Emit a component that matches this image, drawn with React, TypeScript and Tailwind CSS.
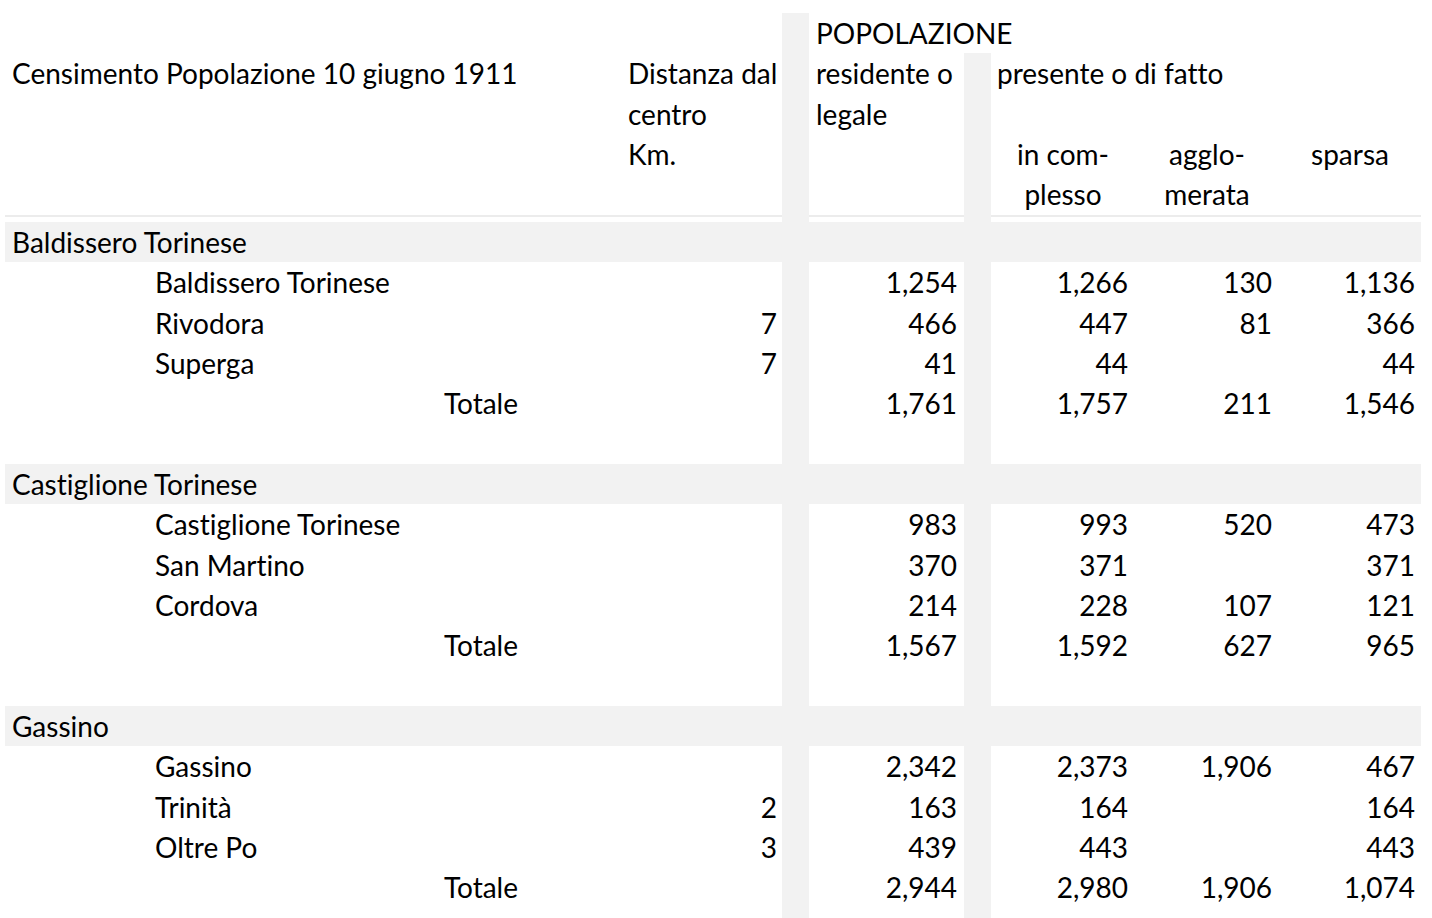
const grid =
  "grid grid-cols-[143px_377px_96px_161px_27px_155px_27px_144px_144px_142px]";
const gray = "bg-[#f2f2f2]";

type Place = { name: string; km?: string; res: string; tot: string; agg?: string; spa: string };
type Group = { title: string; places: Place[]; total: Omit<Place, "name" | "km"> };

const groups: Group[] = [
  {
    title: "Baldissero Torinese",
    places: [
      { name: "Baldissero Torinese", res: "1,254", tot: "1,266", agg: "130", spa: "1,136" },
      { name: "Rivodora", km: "7", res: "466", tot: "447", agg: "81", spa: "366" },
      { name: "Superga", km: "7", res: "41", tot: "44", spa: "44" },
    ],
    total: { res: "1,761", tot: "1,757", agg: "211", spa: "1,546" },
  },
  {
    title: "Castiglione Torinese",
    places: [
      { name: "Castiglione Torinese", res: "983", tot: "993", agg: "520", spa: "473" },
      { name: "San Martino", res: "370", tot: "371", spa: "371" },
      { name: "Cordova", res: "214", tot: "228", agg: "107", spa: "121" },
    ],
    total: { res: "1,567", tot: "1,592", agg: "627", spa: "965" },
  },
  {
    title: "Gassino",
    places: [
      { name: "Gassino", res: "2,342", tot: "2,373", agg: "1,906", spa: "467" },
      { name: "Trinità", km: "2", res: "163", tot: "164", spa: "164" },
      { name: "Oltre Po", km: "3", res: "439", tot: "443", spa: "443" },
    ],
    total: { res: "2,944", tot: "2,980", agg: "1,906", spa: "1,074" },
  },
];

function DataRow({ name, label, km, res, tot, agg, spa }: Partial<Place> & { label?: string }) {
  return (
    <div className={`${grid} h-[40.33px] items-center`}>
      <div />
      <div className={label ? "pr-[7px] text-right" : "pl-[7px] whitespace-nowrap"}>{label ?? name}</div>
      <div />
      <div className="pr-[5px] text-right">{km}</div>
      <div className={`${gray} self-stretch`} />
      <div className="pr-[7px] text-right">{res}</div>
      <div className={`${gray} self-stretch`} />
      <div className="pr-[7px] text-right">{tot}</div>
      <div className="pr-[7px] text-right">{agg}</div>
      <div className="pr-[6px] text-right">{spa}</div>
    </div>
  );
}

function EmptyRow() {
  return (
    <div className={`${grid} h-[40.33px]`}>
      <div />
      <div />
      <div />
      <div />
      <div className={gray} />
      <div />
      <div className={gray} />
      <div />
      <div />
      <div />
    </div>
  );
}

export default function App() {
  return (
    <div
      className="h-[918px] w-[1432px] overflow-hidden bg-white pl-[5px] pt-[13px] text-[28px] leading-[34px] text-black [font-variant-ligatures:none]"
      style={{ fontFamily: "Lato, 'Open Sans', sans-serif" }}
    >
      {/* header block */}
      <div className={`${grid} auto-rows-[40.33px] items-center`}>
        {/* row 0 */}
        <div />
        <div />
        <div />
        <div />
        <div className={`${gray} self-stretch`} />
        <div className="whitespace-nowrap pl-[7px]">POPOLAZIONE</div>
        <div />
        <div />
        <div />
        <div />
        {/* row 1 */}
        <div className="whitespace-nowrap pl-[7px]">Censimento Popolazione 10 giugno 1911</div>
        <div />
        <div />
        <div className="whitespace-nowrap pl-[7px]">Distanza dal</div>
        <div className={`${gray} self-stretch`} />
        <div className="whitespace-nowrap pl-[7px]">residente o</div>
        <div className={`${gray} self-stretch`} />
        <div className="whitespace-nowrap pl-[6px]">presente o di fatto</div>
        <div />
        <div />
        {/* row 2 */}
        <div />
        <div />
        <div />
        <div className="pl-[7px]">centro</div>
        <div className={`${gray} self-stretch`} />
        <div className="pl-[7px]">legale</div>
        <div className={`${gray} self-stretch`} />
        <div />
        <div />
        <div />
        {/* row 3 */}
        <div />
        <div />
        <div />
        <div className="pl-[7px]">Km.</div>
        <div className={`${gray} self-stretch`} />
        <div />
        <div className={`${gray} self-stretch`} />
        <div className="text-center">in com-</div>
        <div className="text-center">agglo-</div>
        <div className="text-center">sparsa</div>
        {/* row 4 */}
        <div />
        <div />
        <div />
        <div />
        <div className={`${gray} self-stretch`} />
        <div />
        <div className={`${gray} self-stretch`} />
        <div className="text-center">plesso</div>
        <div className="text-center">merata</div>
        <div />
      </div>

      {/* rule under the header */}
      <div className={`${grid} h-[7.33px]`}>
        <div className="col-span-4 border-t-2 border-[#ececec]" />
        <div className={gray} />
        <div className="border-t-2 border-[#ececec]" />
        <div className={gray} />
        <div className="col-span-3 border-t-2 border-[#ececec]" />
      </div>

      {groups.map((g) => (
        <div key={g.title}>
          <div className={`${gray} flex h-[40.33px] w-[1416px] items-center pl-[7px]`}>{g.title}</div>
          {g.places.map((p) => (
            <DataRow key={p.name} {...p} />
          ))}
          <DataRow label="Totale" {...g.total} />
          <EmptyRow />
        </div>
      ))}
    </div>
  );
}
